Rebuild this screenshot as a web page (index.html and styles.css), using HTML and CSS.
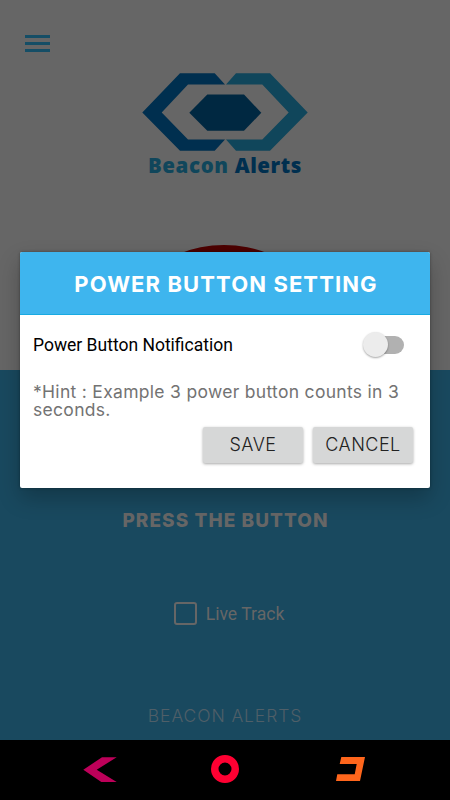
FILE: index.html
```html
<!DOCTYPE html>
<html lang="en">
<head>
<meta charset="utf-8">
<title>Beacon Alerts</title>
<link rel="stylesheet" href="styles.css">
</head>
<body>
<div class="phone">
  <main class="screen">
    <section class="top">
      <div class="menu"><i></i><i></i><i></i></div>
      <div class="logo">
        <svg width="166" height="78" viewBox="142 72.5 166 78">
          <path fill="#002f4f" d="M142.3 112 180 72.7h34.7L225 84h-37l-26.3 28L188 139h37l-10.3 11.3H180z"/>
          <path fill="#10465b" d="M307.7 112 270 72.7h-34L226 84h36.3l26.4 28-26.4 27H226l10 11.3h34z"/>
          <path fill="#002841" d="M189.3 112.3 207.3 94H244l17.3 18.3-17.3 18h-36.7z"/>
        </svg>
        <div class="brand"><span class="beacon">Beacon</span><span class="alerts">Alerts</span></div>
      </div>
      <div class="alarm"></div>
    </section>
    <section class="bottom">
      <div class="press">PRESS THE BUTTON</div>
      <div class="track"><span class="box"></span><span class="track-label">Live Track</span></div>
      <div class="footer">BEACON ALERTS</div>
    </section>
  </main>
  <nav class="nav">
    <svg width="34" height="25" viewBox="83 758 34 25"><path fill="#bd0059" d="M83.3 770.7 102 758.3h14.7l-20 12.4 20 12.3h-15.4z"/></svg>
    <svg width="28" height="28" viewBox="0 0 28 28"><circle cx="14" cy="14" r="10.25" fill="none" stroke="#ff0032" stroke-width="7.5"/></svg>
    <svg width="29" height="24" viewBox="336 757 29 24"><path fill="#ff661c" d="M341.3 757H365l-5 24h-24l1.3-6.7h17.4l2-10.3h-17z"/></svg>
  </nav>
  <div class="dialog">
    <header class="title"><span>POWER BUTTON SETTING</span></header>
    <div class="content">
      <div class="row"><span class="setting">Power Button Notification</span><span class="switch"><i></i></span></div>
      <p class="hint">*Hint : Example 3 power button counts in 3<br>seconds.</p>
      <div class="actions"><button>SAVE</button><button>CANCEL</button></div>
    </div>
  </div>
</div>
</body>
</html>
```

FILE: styles.css
```css
* { box-sizing: border-box; }
body { margin: 0; font-family: Inter, "Open Sans", sans-serif; }
svg { display: block; }
.phone { position: relative; width: 450px; height: 800px; overflow: hidden; display: flex; flex-direction: column; }
.screen { height: 740px; }
.top { height: 370px; background: #666; overflow: hidden; padding-top: 35px; }
.menu { width: 25px; height: 17px; margin-left: 25px; display: flex; flex-direction: column; justify-content: space-between; }
.menu i { height: 3px; background: #154e66; }
.logo { margin-top: 20.5px; display: flex; flex-direction: column; align-items: center; }
.brand { margin-top: 1px; height: 26px; display: flex; gap: 6px; font: 800 20.5px/27px "Open Sans", sans-serif; letter-spacing: .6px; white-space: nowrap; }
.beacon { color: #10465b; }
.alerts { color: #002f4f; }
.alarm { width: 240px; height: 240px; margin: 67.5px auto 0; border-radius: 50%; background: #4c0000; transform: translateX(-1px); }
.bottom { height: 370px; background: #19495f; display: flex; flex-direction: column; align-items: center; color: #666; }
.press { margin-top: 139px; font-size: 19px; line-height: 24px; font-weight: 800; letter-spacing: 1.05px; padding-left: 1px; }
.track { margin-top: 67px; padding-left: 8px; height: 26px; display: flex; align-items: center; gap: 9px; font: 17.6px/26px Roboto, sans-serif; }
.track-label { padding-top: 1px; }
.box { width: 23px; height: 23px; border: 2.5px solid #666; border-radius: 3px; }
.footer { margin-top: 77px; font-size: 17.5px; line-height: 26px; font-weight: 300; letter-spacing: .9px; color: #4f5f68; }
.nav { height: 60px; background: #000; display: flex; align-items: center; justify-content: space-between; padding: 0 85px 0 83px; }
.nav svg { position: relative; top: -1px; }
.nav svg:nth-child(2) { left: -1.5px; }
.dialog { position: absolute; left: 20px; top: 252px; width: 410px; height: 236px; border-radius: 2px; background: #fff; box-shadow: 0 10px 22px rgba(0,0,0,.24), 0 0 3px rgba(0,0,0,.35); }
.title { height: 63px; border-bottom: 1px solid #18aae2; border-radius: 2px 2px 0 0; background: #3eb5ee; color: #fff; text-align: center; font-size: 22px; line-height: 65px; font-weight: 700; letter-spacing: 1.1px; padding-left: 2px; white-space: nowrap; }
.content { padding: 16px 17px 0 13px; }
.row { height: 28px; display: flex; justify-content: space-between; padding-right: 9px; font: 17.5px/29px Roboto, sans-serif; color: #000; }
.switch { width: 37px; height: 18px; margin-top: 5px; border-radius: 9px; background: #b1b1b1; }
.switch i { display: block; width: 25px; height: 25px; margin: -4px 0 0 -4px; border-radius: 50%; background: #ececec; box-shadow: 0 1px 2px rgba(0,0,0,.35); }
.hint { margin: 24px 0 0; font-size: 17.5px; line-height: 18px; letter-spacing: .3px; color: #737373; white-space: nowrap; }
.actions { display: flex; justify-content: flex-end; gap: 10px; margin-top: 8px; }
button { width: 100px; height: 36px; padding: 0; border: 0; border-radius: 2px; background: #d6d7d7; color: #222; font: 300 18px/36px Inter, sans-serif; letter-spacing: .5px; box-shadow: 0 1px 3px rgba(0,0,0,.35); }
```
